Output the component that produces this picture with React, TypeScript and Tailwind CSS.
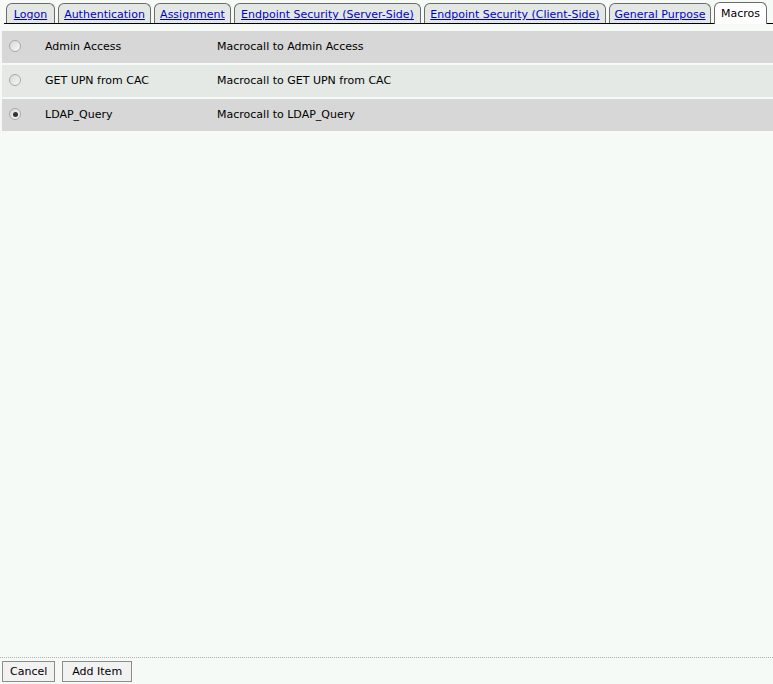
import React from 'react';

const tabs = [
  { label: 'Logon', w: 'w-[49px]' },
  { label: 'Authentication', w: 'w-[93px]' },
  { label: 'Assignment', w: 'w-[77px]' },
  { label: 'Endpoint Security (Server-Side)', w: 'w-[187px]' },
  { label: 'Endpoint Security (Client-Side)', w: 'w-[182px]' },
  { label: 'General Purpose', w: 'w-[102px]' },
];

const macros = [
  { name: 'Admin Access', desc: 'Macrocall to Admin Access', checked: false },
  { name: 'GET UPN from CAC', desc: 'Macrocall to GET UPN from CAC', checked: false },
  { name: 'LDAP_Query', desc: 'Macrocall to LDAP_Query', checked: true },
];

function Radio({ checked }: { checked: boolean }) {
  return (
    <div className="w-[12px] h-[12px] rounded-full border border-[#a8a8a8] bg-gradient-to-br from-[#d8d8d8] to-[#f8f8f8] flex items-center justify-center">
      {checked && <div className="w-[5px] h-[5px] rounded-full bg-[#333]" />}
    </div>
  );
}

export default function App() {
  return (
    <div className="w-[773px] h-[684px] flex flex-col bg-[#f5faf7] text-[11px] text-black font-['DejaVu_Sans',sans-serif] overflow-hidden">
      {/* tab strip */}
      <div className="flex items-end h-[24px] ml-[4px] pl-[2px] gap-[3px] border-b border-black whitespace-nowrap">
        {tabs.map((t) => (
          <div
            key={t.label}
            className={`${t.w} shrink-0 h-[20px] pt-[2px] flex items-center justify-center border border-b-0 border-[#6b6b6b] rounded-t-[6px] bg-[#e3e8e5]`}
          >
            <a href="#" className="text-[#0000cc] underline leading-none">{t.label}</a>
          </div>
        ))}
        <div className="w-[53px] shrink-0 h-[22px] pt-[2px] -mb-px flex items-center justify-center border border-b-0 border-[#6b6b6b] rounded-t-[6px] bg-white">
          Macros
        </div>
      </div>

      {/* macro list */}
      <div className="flex-1 flex flex-col gap-[2px] pt-[7px] pl-[2px]">
        {macros.map((m, i) => (
          <div
            key={m.name}
            className={`h-[32px] pt-[1px] flex items-center ${i % 2 === 1 ? 'bg-[#e4e9e6]' : 'bg-[#d7d7d7]'}`}
          >
            <div className="w-[43px] pl-[7px] -mt-[3px]">
              <Radio checked={m.checked} />
            </div>
            <div className="w-[172px]">{m.name}</div>
            <div>{m.desc}</div>
          </div>
        ))}
      </div>

      {/* footer */}
      <div className="border-t border-dotted border-[#b0b0b0] h-[27px] flex items-start gap-[7px] pt-[3px] pl-[2px]">
        <button className="h-[21px] pt-[1px] px-[7px] border border-[#8c8c8c] bg-[#f2f2f2]">Cancel</button>
        <button className="h-[21px] pt-[1px] px-[9px] border border-[#8c8c8c] bg-[#f2f2f2]">Add Item</button>
      </div>
    </div>
  );
}
